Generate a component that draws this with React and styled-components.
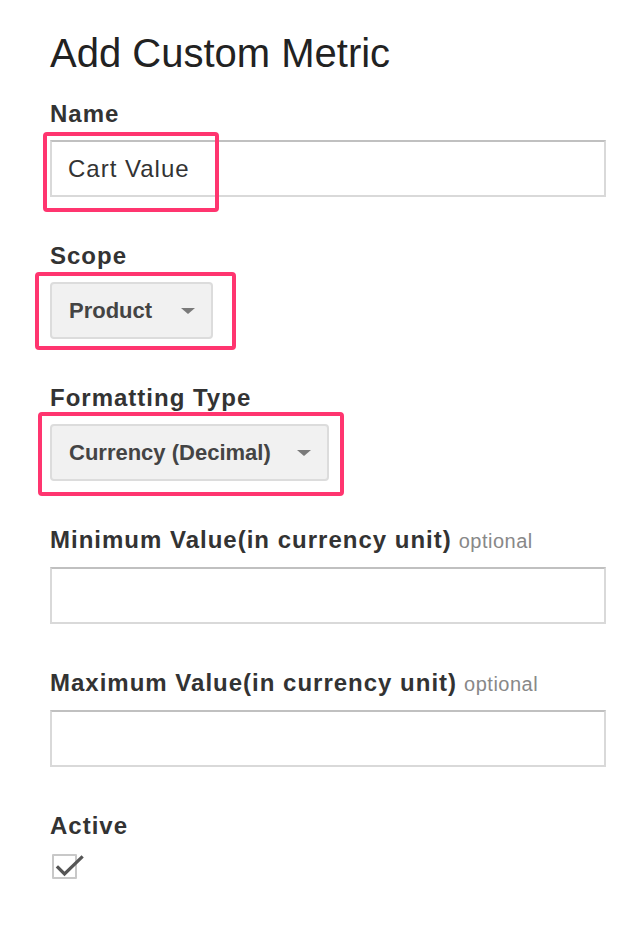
import React from "react";
import styled, { createGlobalStyle } from "styled-components";

const GlobalStyle = createGlobalStyle`
  html, body {
    margin: 0;
    padding: 0;
    background: #ffffff;
  }
  body {
    font-family: "Liberation Sans", Arial, Helvetica, sans-serif;
    color: #333333;
  }
`;

const Page = styled.div`
  padding: 29px 22px 40px 50px;
`;

const Title = styled.h1`
  margin: 0 0 22px;
  font-size: 40px;
  line-height: 48px;
  font-weight: 400;
  color: #222222;
`;

const Field = styled.div`
  margin-bottom: ${(p) => (p.$last ? 0 : "44px")};
`;

const Label = styled.div`
  font-size: 24px;
  line-height: 30px;
  font-weight: 700;
  letter-spacing: 1px;
  color: #333333;
  margin-bottom: ${(p) => p.$gap || "11px"};
`;

const Optional = styled.span`
  margin-left: 7px;
  font-size: 20px;
  font-weight: 400;
  letter-spacing: 0.5px;
  color: #888888;
`;

const Control = styled.div`
  position: relative;
  display: ${(p) => (p.$block ? "block" : "inline-block")};
  vertical-align: top;
`;

const Ring = styled.div`
  position: absolute;
  box-sizing: border-box;
  border: 4px solid #ff356f;
  border-radius: 4px;
  pointer-events: none;
`;

const TextInput = styled.input`
  display: block;
  box-sizing: border-box;
  width: 556px;
  height: 57px;
  margin: 0;
  padding: 0 16px;
  border: 2px solid #d9d9d9;
  border-top-color: #c0c0c0;
  border-radius: 0;
  background: #ffffff;
  font-family: "Liberation Sans", Arial, sans-serif;
  font-size: 24px;
  letter-spacing: 1px;
  color: #333333;
  outline: none;
`;

const Dropdown = styled.button`
  display: inline-flex;
  align-items: center;
  gap: ${(p) => p.$gap || "28px"};
  box-sizing: border-box;
  height: 57px;
  margin: 0;
  padding: 0 16px 0 17px;
  border: 2px solid #dcdcdc;
  border-radius: 4px;
  background: #f1f1f1;
  font-family: "Liberation Sans", Arial, sans-serif;
  font-size: 22px;
  font-weight: 700;
  color: #444444;
  cursor: pointer;
`;

const Caret = styled.span`
  width: 0;
  height: 0;
  border-left: 7px solid transparent;
  border-right: 7px solid transparent;
  border-top: 6px solid #7a7a7a;
  margin-top: 1px;
`;

const CheckBox = styled.div`
  position: relative;
  box-sizing: border-box;
  width: 25px;
  height: 25px;
  margin-left: 2px;
  border: 2px solid #c8c8c8;
  border-radius: 1px;
  background: #ffffff;

  svg {
    position: absolute;
    left: 1px;
    top: -1px;
    overflow: visible;
  }
`;

const HighlightRing = ({ top, left, width, height }) => (
  <Ring style={{ top, left, width, height }} />
);

export default function App() {
  return (
    <>
      <GlobalStyle />
      <Page>
        <Title>Add Custom Metric</Title>

        <Field>
          <Label>Name</Label>
          <Control $block>
            <TextInput defaultValue="Cart Value" />
            <HighlightRing top={-8} left={-7} width={176} height={80} />
          </Control>
        </Field>

        <Field>
          <Label>Scope</Label>
          <Control>
            <Dropdown $gap="29px">
              Product
              <Caret />
            </Dropdown>
            <HighlightRing top={-10} left={-15} width={201} height={78} />
          </Control>
        </Field>

        <Field>
          <Label>Formatting Type</Label>
          <Control>
            <Dropdown $gap="26px">
              Currency (Decimal)
              <Caret />
            </Dropdown>
            <HighlightRing top={-12} left={-12} width={306} height={84} />
          </Control>
        </Field>

        <Field>
          <Label>
            Minimum Value(in currency unit)<Optional>optional</Optional>
          </Label>
          <TextInput />
        </Field>

        <Field>
          <Label>
            Maximum Value(in currency unit)<Optional>optional</Optional>
          </Label>
          <TextInput />
        </Field>

        <Field $last>
          <Label $gap="13px">Active</Label>
          <CheckBox>
            <svg width="28" height="24" viewBox="0 0 28 24">
              <path
                d="M3 12.5 L9.5 19 L26.5 2.5"
                fill="none"
                stroke="#555555"
                strokeWidth="3.2"
                strokeLinecap="square"
                strokeLinejoin="miter"
              />
            </svg>
          </CheckBox>
        </Field>
      </Page>
    </>
  );
}
